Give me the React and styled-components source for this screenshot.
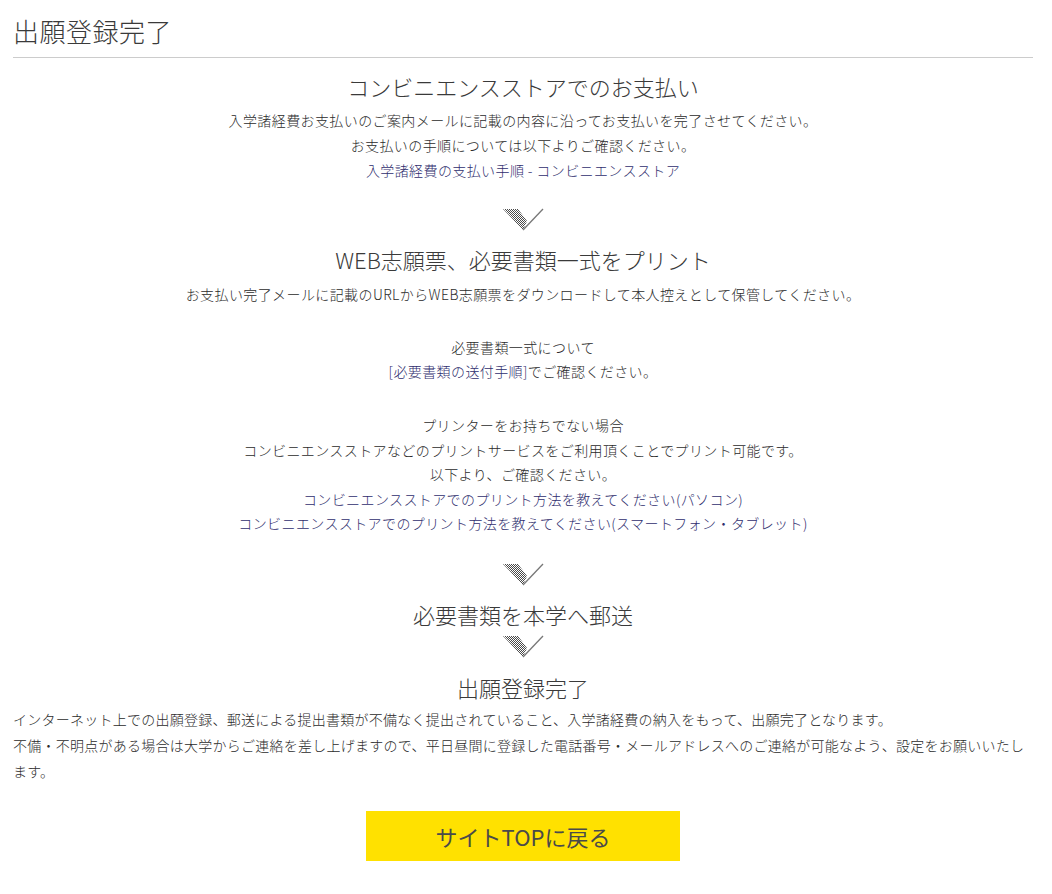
import React from 'react';
import styled, { createGlobalStyle } from 'styled-components';

const GlobalStyle = createGlobalStyle`
  body {
    margin: 0;
    background: #fff;
    color: #333;
    font-family: 'Noto Sans CJK JP', 'Noto Sans', sans-serif;
  }
`;

const Page = styled.div`
  padding: 13px 19px 30px 13px;
`;

const Title = styled.h1`
  margin: 0;
  padding-bottom: 8px;
  border-bottom: 1px solid #cccccc;
  font-size: 26px;
  line-height: 1.4;
  font-weight: 300;
  letter-spacing: 0.5px;
  color: #3a3a3a;
`;

const Steps = styled.div`
  display: flex;
  flex-direction: column;
  align-items: center;
  text-align: center;
  padding-top: 12px;
`;

const StepHeading = styled.h2`
  margin: 0;
  font-size: 22px;
  line-height: 33px;
  font-weight: 300;
  color: #3a3a3a;
`;

const StepBody = styled.p`
  margin: ${({ $gap }) => $gap || 5}px 0 0;
  font-size: 14px;
  line-height: 24.6px;
  font-weight: 300;
  letter-spacing: 0.4px;
  color: #2b2b2b;
`;

const Link = styled.a`
  color: #2f2e6e;
  text-decoration: none;
`;

const ArrowWrap = styled.div`
  display: flex;
  justify-content: center;
  height: 23px;
  margin: ${({ $top }) => $top}px 0 ${({ $bottom }) => $bottom}px;
  svg {
    display: block;
  }
`;

const Notice = styled.p`
  margin: 2px 0 0;
  font-size: 14px;
  line-height: 26px;
  font-weight: 300;
  letter-spacing: 0.25px;
  color: #2b2b2b;
`;

const ButtonRow = styled.div`
  display: flex;
  justify-content: center;
  margin-top: 27px;
`;

const TopButton = styled.a`
  display: flex;
  align-items: center;
  justify-content: center;
  width: 314px;
  height: 50px;
  background: #ffe100;
  color: #4a4a4a;
  font-size: 22px;
  font-weight: 400;
  text-decoration: none;
`;

const Arrow = ({ top = 0, bottom = 0, id }) => (
  <ArrowWrap $top={top} $bottom={bottom}>
    <svg width="42" height="23" viewBox="0 0 42 23">
      <defs>
        <pattern id={id} width="2" height="2" patternUnits="userSpaceOnUse">
          <rect x="0" y="0" width="1" height="1" fill="#4a4a4a" />
          <rect x="1" y="1" width="1" height="1" fill="#4a4a4a" />
        </pattern>
      </defs>
      <polygon points="1,1 16,1 25,13 21,22" fill={`url(#${id})`} />
      <line x1="21" y1="22" x2="41" y2="1" stroke="#777" strokeWidth="1.3" />
    </svg>
  </ArrowWrap>
);

export default function App() {
  return (
    <Page>
      <GlobalStyle />
      <Title>出願登録完了</Title>
      <Steps>
        <StepHeading>コンビニエンスストアでのお支払い</StepHeading>
        <StepBody>
          入学諸経費お支払いのご案内メールに記載の内容に沿ってお支払いを完了させてください。
          <br />
          お支払いの手順については以下よりご確認ください。
          <br />
          <Link href="#">入学諸経費の支払い手順 - コンビニエンスストア</Link>
        </StepBody>
        <Arrow id="a1" top={26} bottom={12} />
        <StepHeading>WEB志願票、必要書類一式をプリント</StepHeading>
        <StepBody $gap={6}>
          お支払い完了メールに記載のURLからWEB志願票をダウンロードして本人控えとして保管してください。
        </StepBody>
        <StepBody $gap={28}>
          必要書類一式について
          <br />
          <Link href="#">[必要書類の送付手順]</Link>でご確認ください。
        </StepBody>
        <StepBody $gap={29}>
          プリンターをお持ちでない場合
          <br />
          コンビニエンスストアなどのプリントサービスをご利用頂くことでプリント可能です。
          <br />
          以下より、ご確認ください。
          <br />
          <Link href="#">コンビニエンスストアでのプリント方法を教えてください(パソコン)</Link>
          <br />
          <Link href="#">コンビニエンスストアでのプリント方法を教えてください(スマートフォン・タブレット)</Link>
        </StepBody>
        <Arrow id="a2" top={27} bottom={12} />
        <StepHeading>必要書類を本学へ郵送</StepHeading>
        <Arrow id="a3" top={4} bottom={13} />
        <StepHeading>出願登録完了</StepHeading>
      </Steps>
      <Notice>
        インターネット上での出願登録、郵送による提出書類が不備なく提出されていること、入学諸経費の納入をもって、出願完了となります。
        <br />
        不備・不明点がある場合は大学からご連絡を差し上げますので、平日昼間に登録した電話番号・メールアドレスへのご連絡が可能なよう、設定をお願いいたします。
      </Notice>
      <ButtonRow>
        <TopButton href="#">サイトTOPに戻る</TopButton>
      </ButtonRow>
    </Page>
  );
}
